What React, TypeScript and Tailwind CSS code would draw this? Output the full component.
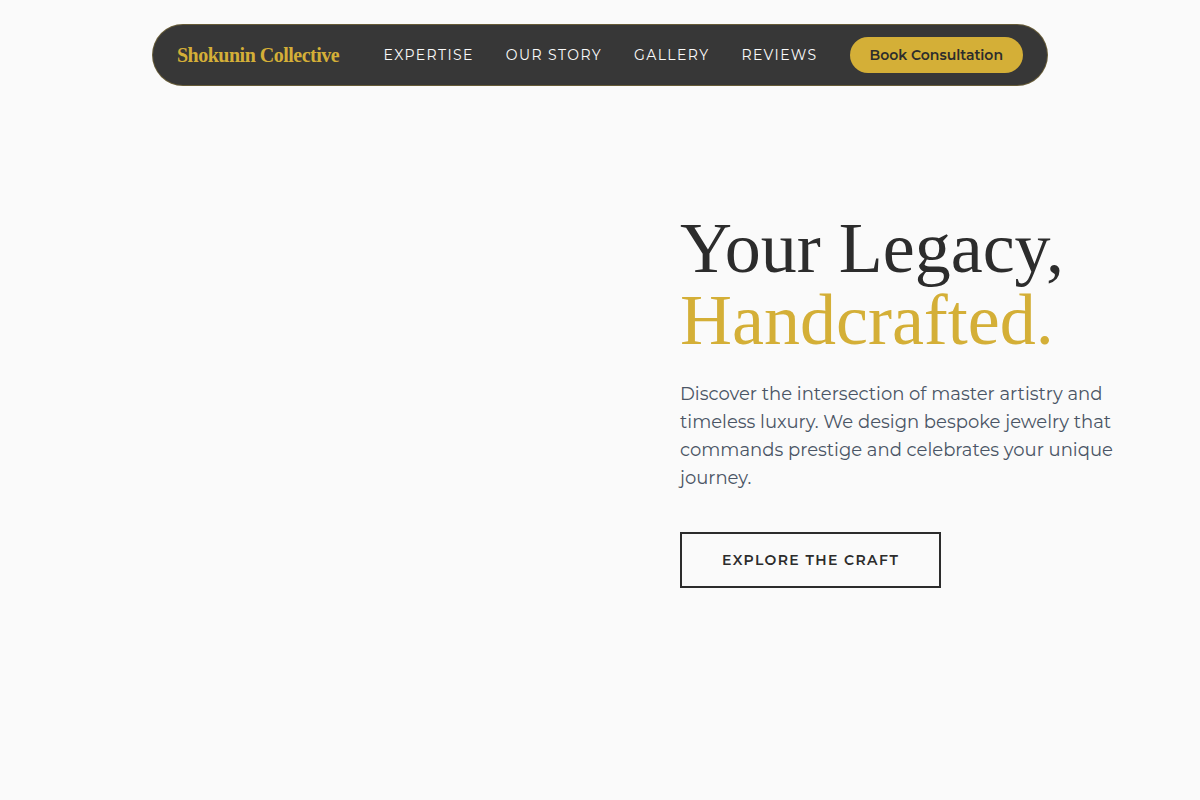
const links = [
  { label: "Expertise", href: "#expertise" },
  { label: "Our Story", href: "#story" },
  { label: "Gallery", href: "#gallery" },
  { label: "Reviews", href: "#reviews" },
];

function Header() {
  return (
    <header className="mx-auto mt-6 w-full max-w-4xl">
      <nav className="flex items-center justify-between rounded-full border border-[#d4af37]/30 bg-[#2c2c2c]/95 px-6 py-3">
        <a href="#top" className="font-['Liberation_Serif',serif] text-xl font-bold tracking-tight whitespace-nowrap text-[#d4af37]">
          Shokunin Collective
        </a>
        <div className="flex items-center gap-8">
          {links.map((link) => (
            <a key={link.href} href={link.href} className="text-sm tracking-widest whitespace-nowrap text-[#fafafa] uppercase">
              {link.label}
            </a>
          ))}
          <button type="button" className="rounded-full bg-[#d4af37] px-5 py-2 text-sm font-semibold whitespace-nowrap text-[#2c2c2c]">
            Book Consultation
          </button>
        </div>
      </nav>
    </header>
  );
}

function Hero() {
  return (
    <main className="grid w-full flex-1 grid-cols-2 items-center pb-[86px]">
      <section className="col-start-2 flex flex-col items-start px-20">
        <h1 className="font-['Liberation_Serif',serif] text-7xl leading-none text-[#2c2c2c]">
          <span className="block">Your Legacy,</span>
          <span className="block text-[#d4af37]">Handcrafted.</span>
        </h1>
        <p className="mt-6 max-w-md text-lg text-gray-600">
          Discover the intersection of master artistry and timeless luxury. We design bespoke jewelry that commands prestige and celebrates your unique journey.
        </p>
        <a href="#expertise" className="mt-10 border-2 border-[#2c2c2c] px-10 py-4 text-sm font-semibold tracking-widest text-[#2c2c2c] uppercase">
          Explore the Craft
        </a>
      </section>
    </main>
  );
}

export default function App() {
  return (
    <div id="top" className="flex min-h-screen flex-col bg-[#fafafa] font-[Montserrat,sans-serif]">
      <Header />
      <Hero />
    </div>
  );
}
